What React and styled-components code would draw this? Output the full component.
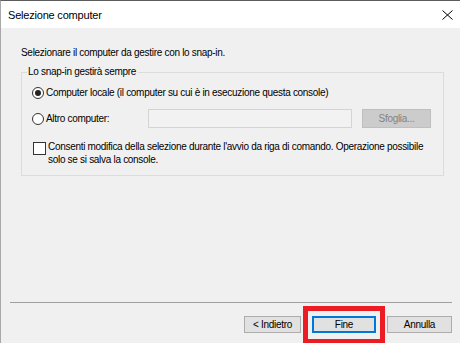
import React from 'react';
import styled, { createGlobalStyle } from 'styled-components';

const GlobalStyle = createGlobalStyle`
  html, body {
    margin: 0;
    padding: 0;
    overflow: hidden;
    background: #f0f0f0;
  }
  * {
    box-sizing: border-box;
  }
`;

// finestra di dialogo
const Window = styled.div`
  position: relative;
  width: 460px;
  height: 343px;
  display: flex;
  flex-direction: column;
  background: #f0f0f0;
  border-top: 1px solid #5c5c5c;
  border-left: 1px solid #a8a8a8;
  font-family: "Segoe UI", "Liberation Sans", Arial, sans-serif;
  font-size: 10px;
  letter-spacing: -0.3px;
  color: #000;
`;

const TitleBar = styled.div`
  height: 27px;
  flex: none;
  display: flex;
  align-items: center;
  justify-content: space-between;
  padding: 0 7px 0 7px;
  background: #fff;
`;

const Title = styled.span`
  font-size: 11px;
  letter-spacing: -0.2px;
  line-height: 14px;
  padding-top: 1px;
`;

const CloseIcon = () => (
  <svg width="11" height="10" viewBox="0 0 11 10">
    <path d="M0.5 0.5 L10.5 9.5 M10.5 0.5 L0.5 9.5" stroke="#000" strokeWidth="1" fill="none" />
  </svg>
);

const Content = styled.div`
  flex: 1;
  padding: 18px 17px 0 20px;
  display: flex;
  flex-direction: column;
`;

const Intro = styled.div`
  line-height: 14px;
`;

const GroupBox = styled.fieldset`
  margin: 5px 0 0 0;
  padding: 0 12px 9px 10px;
  width: 423px;
  border: 1px solid #dcdcdc;
  display: flex;
  flex-direction: column;
`;

const Legend = styled.legend`
  margin-left: -5px;
  padding: 0 2px 0 1px;
  line-height: 14px;
`;

const Row = styled.div`
  display: flex;
  align-items: ${({ $top }) => ($top ? 'flex-start' : 'center')};
  margin-top: ${({ $gap }) => $gap}px;
  min-height: ${({ $h }) => $h || 14}px;
`;

const Radio = styled.span`
  width: 12px;
  height: 12px;
  flex: none;
  border-radius: 50%;
  border: 1px solid #333;
  background: #fff;
  display: flex;
  align-items: center;
  justify-content: center;
  margin-right: 2px;

  &::after {
    content: '';
    width: 6px;
    height: 6px;
    border-radius: 50%;
    background: ${({ $checked }) => ($checked ? '#222' : 'transparent')};
  }
`;

const Check = styled.span`
  width: 13px;
  height: 13px;
  flex: none;
  border: 1px solid #333;
  background: #fff;
  margin: 2px 2px 0 1px;
`;

const Label = styled.span`
  line-height: 14px;
  white-space: nowrap;
`;

const Wrapped = styled.span`
  line-height: 13px;
  white-space: nowrap;
`;

const TextField = styled.div`
  width: 204px;
  height: 19px;
  margin-left: auto;
  background: #f2f2f2;
  border: 1px solid #d4d4d4;
`;

const BrowseButton = styled.div`
  width: 69px;
  height: 19px;
  margin-left: 10px;
  background: #cccccc;
  border: 1px solid #bfbfbf;
  color: #838383;
  display: flex;
  align-items: center;
  justify-content: center;
`;

const Separator = styled.div`
  height: 1px;
  margin: 0 8px 0 9px;
  background: #a0a0a0;
  flex: none;
`;

const Footer = styled.div`
  display: flex;
  justify-content: flex-end;
  gap: 11px;
  padding: 13px 8px 10px 0;
  flex: none;
`;

const Button = styled.div`
  width: ${({ $w }) => $w}px;
  height: 17px;
  background: #e1e1e1;
  border: ${({ $default }) => ($default ? '2px solid #0078d7' : '1px solid #adadad')};
  display: flex;
  align-items: center;
  justify-content: center;
`;

// evidenziazione rossa sopra il pulsante Fine
const Highlight = styled.div`
  position: absolute;
  left: 302px;
  top: 305px;
  width: 82px;
  height: 38px;
  border: 5px solid #ec1c24;
  pointer-events: none;
`;

const App = () => (
  <>
    <GlobalStyle />
    <Window>
      <TitleBar>
        <Title>Selezione computer</Title>
        <CloseIcon />
      </TitleBar>
      <Content>
        <Intro>Selezionare il computer da gestire con lo snap-in.</Intro>
        <GroupBox>
          <Legend>Lo snap-in gestirà sempre</Legend>
          <Row $gap={7}>
            <Radio $checked />
            <Label>Computer locale (il computer su cui è in esecuzione questa console)</Label>
          </Row>
          <Row $gap={9} $h={19}>
            <Radio />
            <Label>Altro computer:</Label>
            <TextField />
            <BrowseButton>Sfoglia...</BrowseButton>
          </Row>
          <Row $gap={12} $top>
            <Check />
            <Wrapped>
              Consenti modifica della selezione durante l'avvio da riga di comando. Operazione possibile
              <br />
              solo se si salva la console.
            </Wrapped>
          </Row>
        </GroupBox>
      </Content>
      <Separator />
      <Footer>
        <Button $w={57}>&lt; Indietro</Button>
        <Button $w={64} $default>Fine</Button>
        <Button $w={65}>Annulla</Button>
      </Footer>
      <Highlight />
    </Window>
  </>
);

export default App;
